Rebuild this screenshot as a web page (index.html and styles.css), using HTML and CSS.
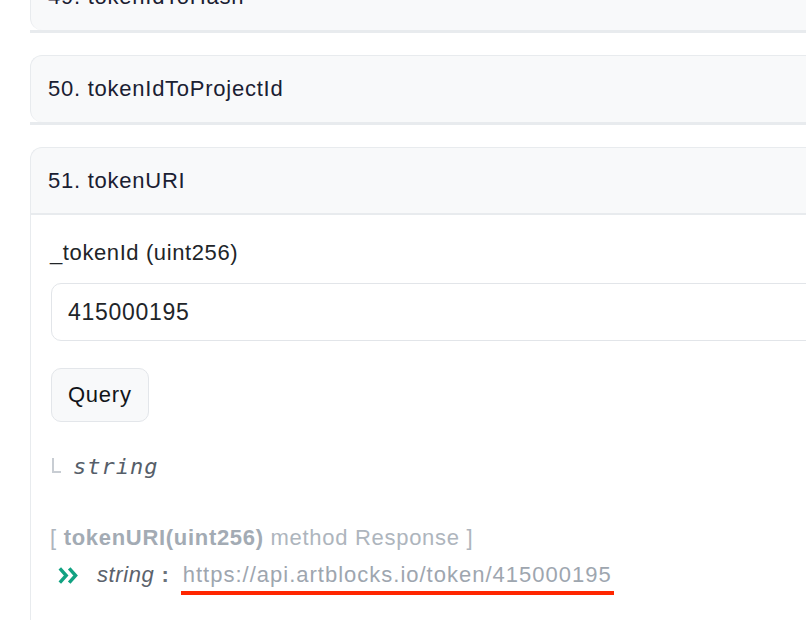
FILE: index.html
```html
<!DOCTYPE html>
<html lang="en">
<head>
<meta charset="utf-8">
<title>Read Contract</title>
<link rel="stylesheet" href="styles.css">
</head>
<body>
<div class="fn-list">
  <section class="fn-card collapsed">
    <div class="fn-head">49. tokenIdToHash</div>
  </section>
  <section class="fn-card collapsed">
    <div class="fn-head">50. tokenIdToProjectId</div>
  </section>
  <section class="fn-card open">
    <div class="fn-head">51. tokenURI</div>
    <div class="fn-body">
      <div class="param-label">_tokenId (uint256)</div>
      <input class="param-input" type="text" value="415000195">
      <button class="query-btn" type="button">Query</button>
      <div class="return-row"><span class="tree-mark"></span><span class="return-type">string</span></div>
      <div class="resp-head">[ <b>tokenURI(uint256)</b> method Response ]</div>
      <div class="resp-row">
        <svg class="chev" width="20" height="17" viewBox="0 0 20 17" aria-hidden="true"><path d="M1.8 1.4 L8.2 8.5 L1.8 15.6 M11.2 1.4 L17.6 8.5 L11.2 15.6" fill="none" stroke="#12a282" stroke-width="3.4"/></svg>
        <span class="res-type">string</span><span class="res-colon">:</span><span class="res-val">https://api.artblocks.io/token/415000195</span>
      </div>
    </div>
  </section>
</div>
</body>
</html>
```
FILE: styles.css
```css
html, body {
  margin: 0;
  padding: 0;
  background: #ffffff;
  overflow: hidden;
}
body {
  font-family: "Liberation Sans", Arial, sans-serif;
  color: #212529;
}
.fn-list {
  display: flex;
  flex-direction: column;
  gap: 22px;
  margin-top: -37px;
  padding-left: 30px;
  width: 820px;
}
.fn-card.collapsed {
  border-bottom: 3px solid #e8ebee;
}
.fn-head {
  box-sizing: border-box;
  height: 67px;
  display: flex;
  align-items: center;
  padding-left: 17px;
  background: #f8f9fa;
  border: 1px solid #e8ebee;
  border-right: none;
  border-bottom: none;
  border-radius: 12px 0 0 12px;
  font-size: 22px;
  letter-spacing: 0.75px;
  color: #1a2032;
}
.fn-card.open .fn-head {
  height: 68px;
  border-radius: 12px 0 0 0;
  border-bottom: 2px solid #e8ebee;
}
.fn-body {
  border-left: 1px solid #e8ebee;
  padding: 24px 0 40px 20px;
}
.param-label {
  font-size: 22px;
  line-height: 28px;
  letter-spacing: 0.6px;
  color: #212529;
  margin-left: -1px;
}
.param-input {
  display: block;
  box-sizing: border-box;
  margin: 16px 0 0 0;
  width: 780px;
  height: 58px;
  padding: 0 0 0 16px;
  border: 1px solid #e2e5e9;
  border-radius: 10px;
  background: #ffffff;
  font-family: "Liberation Sans", Arial, sans-serif;
  font-size: 23px;
  letter-spacing: 0.7px;
  color: #212529;
  outline: none;
}
.query-btn {
  display: block;
  box-sizing: border-box;
  margin-top: 27px;
  height: 54px;
  padding: 0 16px;
  border: 1px solid #e3e6ea;
  border-radius: 10px;
  background: #f8f9fa;
  font-family: "Liberation Sans", Arial, sans-serif;
  font-size: 22px;
  letter-spacing: 0.75px;
  color: #111418;
}
.return-row {
  margin-top: 30px;
  height: 28px;
  display: flex;
  align-items: center;
}
.tree-mark {
  display: inline-block;
  box-sizing: border-box;
  width: 9px;
  height: 15px;
  margin-left: 1px;
  margin-top: -1px;
  border-left: 2px solid #c8cdd3;
  border-bottom: 2px solid #c8cdd3;
}
.return-type {
  margin-left: 12px;
  font-family: "DejaVu Sans Mono", monospace;
  font-style: italic;
  font-size: 22px;
  letter-spacing: 1px;
  color: #565e69;
}
.resp-head {
  margin-top: 44px;
  line-height: 28px;
  font-size: 22px;
  letter-spacing: 0.7px;
  color: #aeb5bd;
  margin-left: -1px;
}
.resp-head b {
  color: #a3abb4;
}
.resp-row {
  margin-top: 9px;
  line-height: 28px;
  font-size: 22px;
  display: flex;
  align-items: center;
}
.chev {
  margin-left: 7px;
  flex: none;
}
.res-type {
  margin-left: 19px;
  font-style: italic;
  letter-spacing: 0.6px;
  color: #5b626c;
}
.res-colon {
  margin-left: 7px;
  font-weight: bold;
  color: #6b727b;
}
.res-val {
  margin-left: 12px;
  padding: 0 2px 0 2px;
  letter-spacing: 1px;
  color: #9ea6af;
  position: relative;
}
.res-val::after {
  content: "";
  position: absolute;
  left: 0;
  right: 0;
  bottom: -6px;
  height: 4px;
  background: #ff2600;
}
```
